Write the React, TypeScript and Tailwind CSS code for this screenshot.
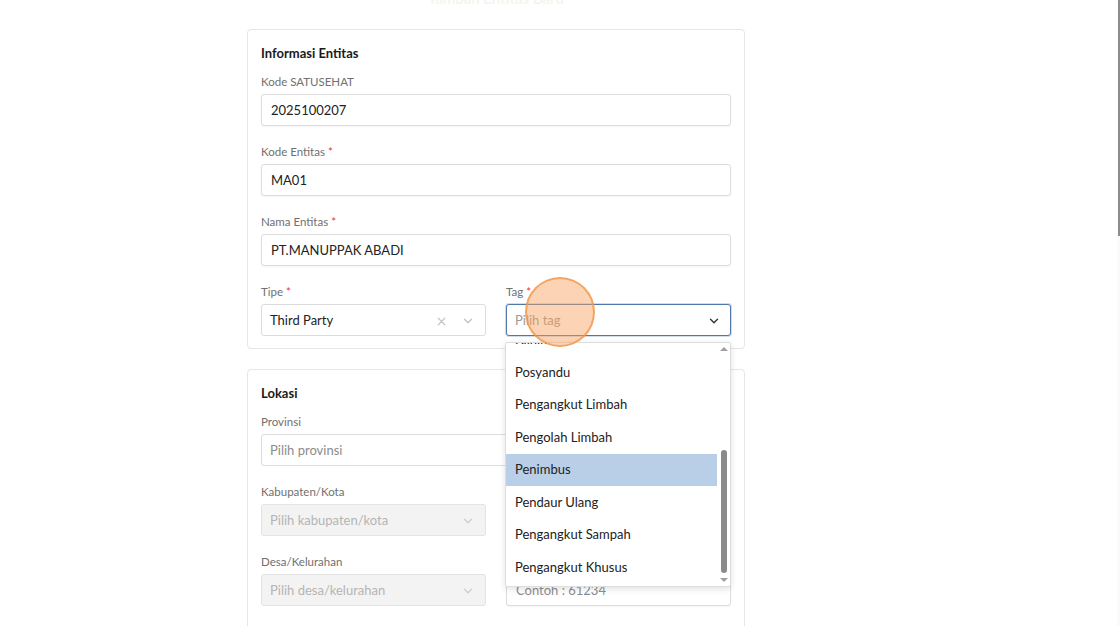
import React from "react";

const TAGS = [
  "Rumah Sakit",
  "Klinik",
  "Posyandu",
  "Pengangkut Limbah",
  "Pengolah Limbah",
  "Penimbus",
  "Pendaur Ulang",
  "Pengangkut Sampah",
  "Pengangkut Khusus",
];

function Chevron({ className = "" }: { className?: string }) {
  return (
    <svg width="14" height="14" viewBox="0 0 24 24" fill="none" stroke="currentColor" strokeWidth="2.4" strokeLinecap="round" strokeLinejoin="round" className={className} aria-hidden>
      <path d="M6 9l6 6 6-6" />
    </svg>
  );
}

function Label({ text, required }: { text: string; required?: boolean }) {
  return (
    <div className="mb-[4px] h-4 text-[11.5px] leading-4 text-[#707070]">
      {text}
      {required && <span className="ml-[3px] text-[#e53935]">*</span>}
    </div>
  );
}

function TextInput({ value, placeholder }: { value?: string; placeholder?: string }) {
  return (
    <div className="flex h-8 items-center rounded-[3px] border border-[#dcdcdc] bg-white px-[9px] pt-[2px] text-[13px] shadow-[0_1px_1px_rgba(0,0,0,0.04)]">
      {value ? <span className="text-[#222]">{value}</span> : <span className="text-[#8c8c8c]">{placeholder}</span>}
    </div>
  );
}

function DisabledSelect({ placeholder }: { placeholder: string }) {
  return (
    <div className="flex h-8 items-center justify-between rounded-[3px] border border-[#e3e3e3] bg-[#f3f3f3] pl-[8px] pr-[10px] pt-[2px] text-[13px] text-[#b5b5b5]">
      <span>{placeholder}</span>
      <Chevron className="text-[#cfcfcf]" />
    </div>
  );
}

export default function App() {
  return (
    <div className="relative h-[626px] w-[1120px] overflow-hidden bg-white" style={{ fontFamily: "Lato, 'Open Sans', sans-serif" }}>
      {/* page scrollbar */}
      <div className="absolute right-0 top-0 h-full w-[3px] bg-[#fafafa]">
        <div className="ml-[1px] h-[236px] w-[2px] bg-[#8d8d8d]" />
      </div>

      <div className="ml-[247px] w-[498px]">
        <div className="flex h-[29px] justify-center overflow-hidden">
          <div className="-mt-[13px] text-[15px] font-semibold text-[#f5f4ec]">Tambah Entitas Baru</div>
        </div>

        {/* Informasi Entitas */}
        <div className="rounded-[4px] border border-[#e6e6e6] px-[13px] pb-[12px] pt-[15px]">
          <div className="h-4 text-[13px] font-bold leading-4 text-[#1a1a1a]">Informasi Entitas</div>
          <div className="mt-[13px] flex flex-col gap-[18px]">
            <div>
              <Label text="Kode SATUSEHAT" />
              <TextInput value="2025100207" />
            </div>
            <div>
              <Label text="Kode Entitas" required />
              <TextInput value="MA01" />
            </div>
            <div>
              <Label text="Nama Entitas" required />
              <TextInput value="PT.MANUPPAK ABADI" />
            </div>
            <div className="grid grid-cols-2 gap-5">
              <div>
                <Label text="Tipe" required />
                <div className="flex h-8 items-center justify-between rounded-[3px] border border-[#dcdcdc] bg-white pl-[8px] pr-[10px] pt-[2px] text-[13px] text-[#222]">
                  <span>Third Party</span>
                  <div className="flex items-center gap-[13px] text-[#c4c4c4]">
                    <svg width="13" height="13" viewBox="0 0 24 24" fill="none" stroke="currentColor" strokeWidth="2.2" strokeLinecap="round" aria-hidden>
                      <path d="M6 6l12 12M18 6L6 18" />
                    </svg>
                    <Chevron />
                  </div>
                </div>
              </div>
              <div className="relative">
                <Label text="Tag" required />
                <div className="flex h-8 items-center justify-between rounded-[3px] border border-[#4f78aa] bg-white pl-[8px] pr-[9px] pt-[2px] text-[13px] text-[#9a9a9a] shadow-[0_0_0_1px_rgba(79,120,170,0.25)]">
                  <span>Pilih tag</span>
                  <Chevron className="text-[#333]" />
                </div>

                {/* dropdown */}
                <div className="absolute left-[-1px] top-[calc(100%+6px)] z-10 h-[245px] w-[226px] overflow-hidden rounded-[2px] border border-[#dedede] bg-white shadow-[0_2px_6px_rgba(0,0,0,0.12)]">
                  <div className="-mt-[52px] mr-[13px]">
                    {TAGS.map((t) => (
                      <div
                        key={t}
                        className={`flex h-[32.5px] items-center px-[9px] text-[13px] text-[#222] ${t === "Penimbus" ? "bg-[#b9cfe7]" : ""}`}
                      >
                        {t}
                      </div>
                    ))}
                  </div>
                  <div className="absolute right-0 top-0 flex h-full w-[13px] flex-col items-center justify-between py-[4px]">
                    <div className="h-0 w-0 border-x-[4px] border-b-[4px] border-x-transparent border-b-[#a0a0a0]" />
                    <div className="h-0 w-0 border-x-[4px] border-t-[4px] border-x-transparent border-t-[#a0a0a0]" />
                  </div>
                  <div className="absolute right-[3px] top-[107px] h-[123px] w-[6px] rounded-full bg-[#8a8a8a]" />
                </div>

                {/* touch indicator */}
                <div className="pointer-events-none absolute left-[19px] top-[-7px] z-20 h-[70px] w-[70px] rounded-full border-2 border-[rgba(242,150,70,0.75)] bg-[rgba(248,160,90,0.45)]" />
              </div>
            </div>
          </div>
        </div>

        {/* Lokasi */}
        <div className="mt-[20px] rounded-[4px] border border-[#e6e6e6] px-[13px] pb-[12px] pt-[15px]">
          <div className="h-4 text-[13px] font-bold leading-4 text-[#1a1a1a]">Lokasi</div>
          <div className="mt-[13px] flex flex-col gap-[18px]">
            <div>
              <Label text="Provinsi" />
              <div className="flex h-8 items-center justify-between rounded-[3px] border border-[#dcdcdc] bg-white pl-[8px] pr-[10px] pt-[2px] text-[13px] text-[#8c8c8c]">
                <span>Pilih provinsi</span>
                <Chevron className="text-[#cfcfcf]" />
              </div>
            </div>
            <div className="grid grid-cols-2 gap-5">
              <div>
                <Label text="Kabupaten/Kota" />
                <DisabledSelect placeholder="Pilih kabupaten/kota" />
              </div>
              <div>
                <Label text="Kecamatan" />
                <DisabledSelect placeholder="Pilih kecamatan" />
              </div>
            </div>
            <div className="grid grid-cols-2 gap-5">
              <div>
                <Label text="Desa/Kelurahan" />
                <DisabledSelect placeholder="Pilih desa/kelurahan" />
              </div>
              <div>
                <Label text="Kode Pos" />
                <TextInput placeholder="Contoh : 61234" />
              </div>
            </div>
            <div>
              <div className="text-[12px] leading-4 text-[#e8e8e8]">Alamat</div>
            </div>
          </div>
        </div>
      </div>
    </div>
  );
}
